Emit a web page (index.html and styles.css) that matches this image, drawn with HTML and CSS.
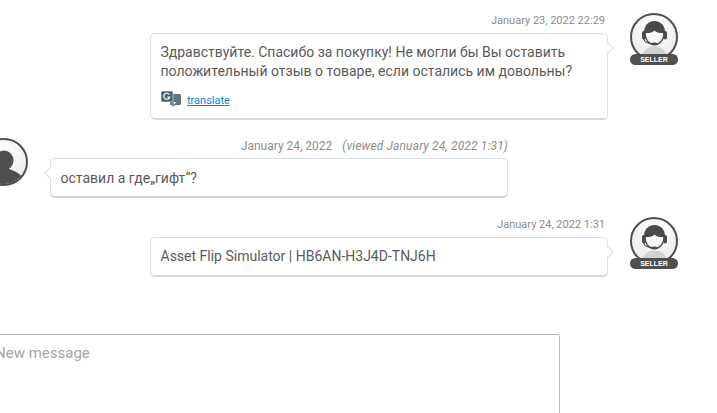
FILE: index.html
```
<!DOCTYPE html>
<html lang="ru">
<head>
<meta charset="utf-8">
<title>Messages</title>
<link rel="stylesheet" href="styles.css">
</head>
<body>
<svg class="defs" width="0" height="0" aria-hidden="true">
  <defs>
    <radialGradient id="disc" cx="50%" cy="30%" r="75%">
      <stop offset="0" stop-color="#ffffff"/>
      <stop offset="1" stop-color="#e9e9e9"/>
    </radialGradient>
    <symbol id="seller" viewBox="0 0 48 48">
      <circle cx="24" cy="24" r="23" fill="url(#disc)" stroke="#4f4f4f" stroke-width="2"/>
      <path d="M12 43c1-5 5-8 9-9.500h7c4 1.500 8 4.500 9 9.500z" fill="#d2d2d2"/>
      <path d="M24.500 8c6.500 0 10.500 5 10.500 11 0 8-5 13.500-10.500 13.500S14 27 14 19c0-6 4-11 10.500-11z" fill="#4a4a4a"/>
      <path d="M15.800 20c3.500 .2 6.500-.4 8.700-2.500 2 2.200 5 2.800 8.700 2.500 .3 6-3.700 10.800-8.700 10.800s-9-4.800-8.700-10.800z" fill="#f6f6f6"/>
      <rect x="12" y="18" width="3.600" height="8.500" rx="1.800" fill="#4a4a4a"/>
      <rect x="33.400" y="18" width="3.600" height="8.500" rx="1.800" fill="#4a4a4a"/>
      <path d="M14 26c0 3 4 4.500 9 4.500" fill="none" stroke="#4a4a4a" stroke-width="1.100"/>
      <ellipse cx="24.500" cy="30.500" rx="2.600" ry="1.100" fill="#4a4a4a"/>
    </symbol>
  </defs>
</svg>
<main class="thread">
  <article class="msg msg--out">
    <div class="msg-body">
      <div class="stamp stamp--out"><time>January 23, 2022 22:29</time></div>
      <div class="bubble bubble--out">
        <p class="text">Здравствуйте. Спасибо за покупку! Не могли бы Вы оставить положительный отзыв о товаре, если остались им довольны?</p>
        <div class="translate">
          <svg class="translate-icon" viewBox="0 0 20 16" width="20" height="16" aria-hidden="true">
            <path d="M9 3h9.500a1.500 1.500 0 0 1 1.500 1.500v8a1.500 1.500 0 0 1-1.500 1.500h-4l-3 2v-2h-2.500z" fill="#5d7585"/>
            <path d="M1.500 0h9a1.500 1.500 0 0 1 1.500 1.500v8a1.500 1.500 0 0 1-1.500 1.500h-9a1.500 1.500 0 0 1-1.500-1.500v-8a1.500 1.500 0 0 1 1.500-1.500z" fill="#4b6170" stroke="#fff" stroke-width=".6"/>
            <path d="M8.300 3.600a3 3 0 1 0 .4 2.400h-2.500" fill="none" stroke="#fff" stroke-width="1.200"/>
            <path d="M12.500 11v3l3-3z" fill="#fff"/>
          </svg>
          <a class="translate-link" href="#">translate</a>
        </div>
      </div>
    </div>
    <div class="avatar">
      <svg class="avatar-img" aria-hidden="true"><use href="#seller"/></svg>
      <span class="badge">SELLER</span>
    </div>
  </article>

  <article class="msg msg--in">
    <div class="avatar">
      <svg class="avatar-img" viewBox="0 0 48 48" aria-hidden="true">
        <circle cx="24" cy="24" r="23" fill="url(#disc)" stroke="#4f4f4f" stroke-width="2"/>
        <ellipse cx="24" cy="22.500" rx="9.500" ry="10" fill="#4f4f4f"/>
        <path d="M7 38c3-4 10-7 17-8 7 1 14 4 17 8A22 22 0 0 1 7 38z" fill="#4f4f4f"/>
      </svg>
    </div>
    <div class="msg-body">
      <div class="stamp stamp--in"><time class="stamp-date">January 24, 2022</time><em class="stamp-viewed">(viewed January 24, 2022 1:31)</em></div>
      <div class="bubble bubble--in">
        <p class="text">оставил а где„гифт“?</p>
      </div>
    </div>
  </article>

  <article class="msg msg--out">
    <div class="msg-body">
      <div class="stamp stamp--out"><time>January 24, 2022 1:31</time></div>
      <div class="bubble bubble--out">
        <p class="text">Asset Flip Simulator | HB6AN-H3J4D-TNJ6H</p>
      </div>
    </div>
    <div class="avatar">
      <svg class="avatar-img" aria-hidden="true"><use href="#seller"/></svg>
      <span class="badge">SELLER</span>
    </div>
  </article>

  <textarea class="composer" placeholder="New message"></textarea>
</main>
</body>
</html>
```
FILE: styles.css
```
html, body {
  margin: 0;
  padding: 0;
  height: 413px;
  overflow: hidden;
  background: #fff;
}
.defs {
  position: absolute;
}
.thread {
  width: 698px;
  margin-left: -20px;
  padding-top: 14px;
  font-family: Roboto, sans-serif;
  color: #5a5a5a;
}
.msg {
  display: flex;
  gap: 22px;
  align-items: flex-start;
  margin-bottom: 19px;
}
.msg--in {
  margin-bottom: 20px;
}
.msg--out {
  justify-content: flex-end;
}
.msg-body {
  width: 458px;
}
.stamp {
  height: 14px;
  font-size: 11px;
  line-height: 14px;
  color: #8c8c8c;
  margin-bottom: 5px;
  display: flex;
  justify-content: flex-end;
}
.stamp--out {
  padding-right: 3px;
}
.stamp--in {
  font-size: 12px;
}
.stamp-viewed {
  margin-left: 10px;
  letter-spacing: .14px;
}
.bubble {
  position: relative;
  box-sizing: border-box;
  background: #fff;
  border-radius: 5px;
  padding: 9px 10px 9px 9.500px;
}
.bubble--out {
  border: 1px solid #dedede;
  border-bottom: 2px solid #d8d8d8;
}
.bubble--in {
  border: 1px solid #d8dde6;
  border-bottom: 2px solid #ccd2dd;
  padding-top: 10px;
  padding-bottom: 8px;
}
.bubble::after {
  content: "";
  position: absolute;
  top: 10px;
  width: 7px;
  height: 7px;
  background: #fff;
  transform: rotate(45deg);
}
.bubble--out::after {
  right: -5px;
  border-top: 1px solid #dedede;
  border-right: 1px solid #dedede;
}
.bubble--in::after {
  left: -5px;
  border-bottom: 1px solid #d8dde6;
  border-left: 1px solid #d8dde6;
}
.text {
  margin: 0;
  font-size: 14px;
  line-height: 19px;
  color: #5a5a5a;
}
.translate {
  display: flex;
  align-items: flex-start;
  gap: 6px;
  margin-top: 8px;
  height: 20px;
}
.translate-icon {
  display: block;
  margin: 2px 0 0 .5px;
}
.translate-link {
  font-size: 11px;
  line-height: 24px;
  color: #0a84d0;
  text-decoration: underline;
}
.avatar {
  position: relative;
  flex: none;
  width: 48px;
  height: 52px;
  margin-top: -1px;
}
.avatar-img {
  display: block;
  width: 48px;
  height: 48px;
}
.badge {
  position: absolute;
  left: 0;
  top: 41px;
  width: 48px;
  height: 11px;
  border-radius: 6px;
  background: #4f4f4f;
  color: #fff;
  font-family: "Liberation Sans", Arial, sans-serif;
  font-size: 7px;
  font-weight: 700;
  line-height: 11px;
  text-align: center;
}
.composer {
  display: block;
  box-sizing: border-box;
  width: 574px;
  height: 120px;
  margin: 57px 0 0 6px;
  padding: 8px 8px;
  border: 1px solid #b8b8b8;
  border-radius: 2px;
  outline: none;
  resize: none;
  background: #fff;
  font-family: Roboto, sans-serif;
  font-size: 15px;
  line-height: 20px;
}
.composer::placeholder {
  color: #a6a6a6;
  opacity: 1;
}
```
